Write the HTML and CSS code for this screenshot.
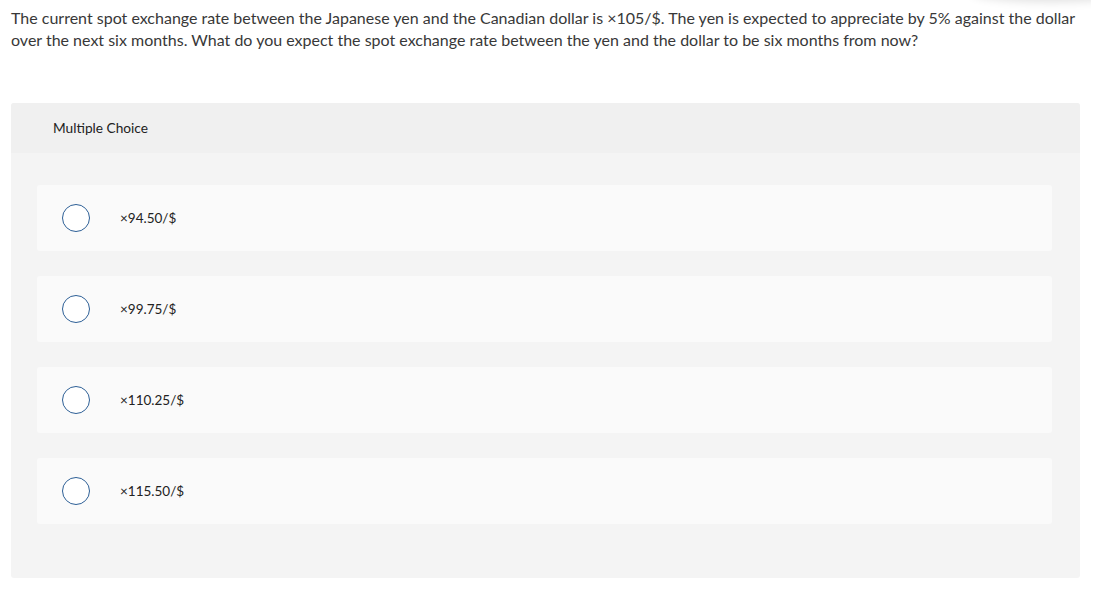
FILE: index.html
```html
<!DOCTYPE html>
<html>
<head>
<meta charset="utf-8">
<link rel="stylesheet" href="styles.css">
</head>
<body>
<div class="top-shadow"></div>
<p class="question">The current spot exchange rate between the Japanese yen and the Canadian dollar is ×105/$. The yen is expected to appreciate by 5% against the dollar over the next six months. What do you expect the spot exchange rate between the yen and the dollar to be six months from now?</p>
<div class="panel">
  <div class="panel-header">Multiple Choice</div>
  <div class="options">
    <div class="option"><span class="radio"></span><span class="label">×94.50/$</span></div>
    <div class="option"><span class="radio"></span><span class="label">×99.75/$</span></div>
    <div class="option"><span class="radio"></span><span class="label">×110.25/$</span></div>
    <div class="option"><span class="radio"></span><span class="label">×115.50/$</span></div>
  </div>
</div>
</body>
</html>
```

FILE: styles.css
```css
html, body {
  margin: 0;
  padding: 0;
  background: #fff;
}
body {
  font-family: "Lato", "Liberation Sans", sans-serif;
  color: #333;
  padding: 7px 11px 0 11px;
  width: 1069px;
  position: relative;
}
.top-shadow {
  position: absolute;
  top: -20px;
  right: -40px;
  width: 160px;
  height: 20px;
  box-shadow: 0 2px 10px rgba(0,0,0,0.12);
  border-radius: 50%;
}
.question {
  margin: 0;
  font-size: 16px;
  line-height: 22px;
  color: #383838;
}
.panel {
  margin-top: 52px;
  background: #f4f4f4;
  border-radius: 3px;
  padding-bottom: 54px;
}
.panel-header {
  background: #f0f0f0;
  height: 50px;
  line-height: 50px;
  padding-left: 42px;
  font-size: 13.7px;
  color: #222;
  border-radius: 3px 3px 0 0;
}
.options {
  display: flex;
  flex-direction: column;
  gap: 25px;
  padding: 32px 28px 0 26px;
}
.option {
  background: #fafafa;
  border-radius: 3px;
  height: 66px;
  display: flex;
  align-items: center;
}
.radio {
  box-sizing: border-box;
  width: 28px;
  height: 28px;
  border: 1.5px solid #2d5f96;
  border-radius: 50%;
  background: #fff;
  margin-left: 25px;
}
.label {
  margin-left: 30px;
  font-size: 13.5px;
  color: #222;
}
```
